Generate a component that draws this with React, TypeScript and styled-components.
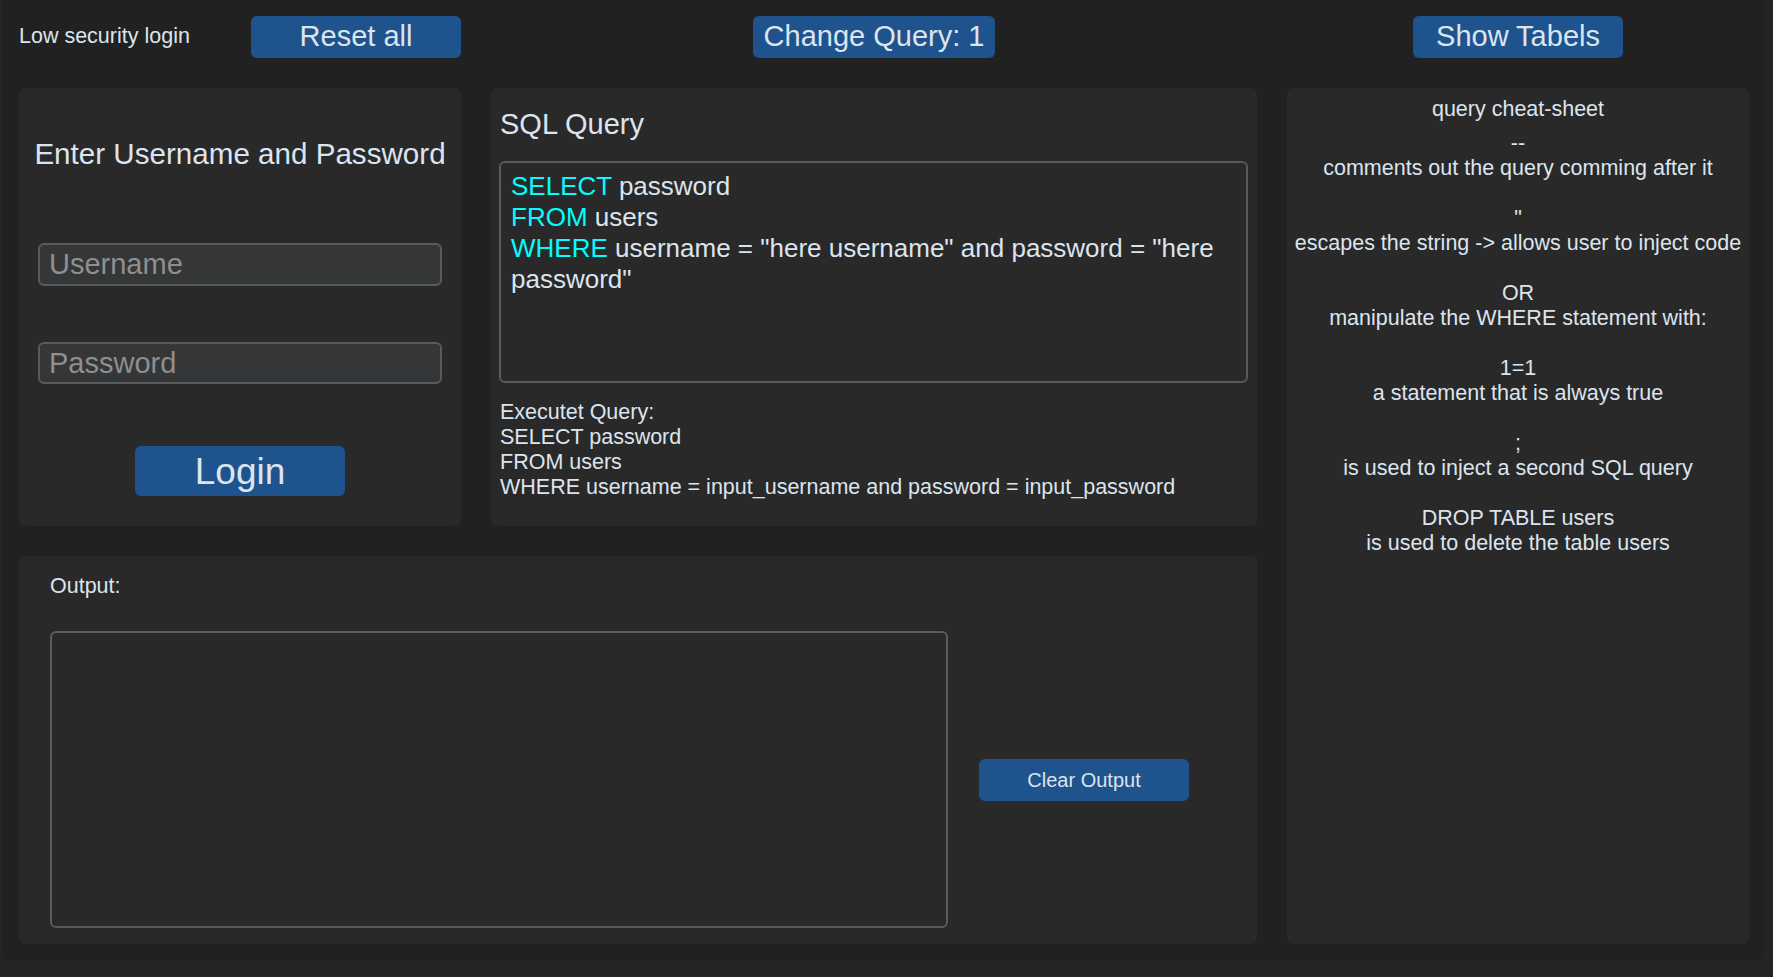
import styled, { createGlobalStyle } from "styled-components";

const GlobalStyle = createGlobalStyle`
  html, body {
    margin: 0;
    padding: 0;
    background: #242424;
  }
  body {
    font-family: "Liberation Sans", Arial, sans-serif;
    color: #dce4ee;
    overflow: hidden;
  }
  * {
    box-sizing: border-box;
  }
`;

const Window = styled.div`
  width: 1773px;
  height: 977px;
  padding: 0 10px 17px 2px;
  background: #242424;
`;

const Shell = styled.div`
  height: 960px;
  background: #212121;
  border-radius: 0 0 6px 6px;
  padding: 15px 14px 16px 17px;
  display: grid;
  grid-template-columns: 442px 766px 462px;
  grid-template-rows: 43px 438px 388px;
  column-gap: 30px;
  row-gap: 30px;
`;

const TopCell = styled.div<{ $spread?: boolean }>`
  display: flex;
  align-items: center;
  justify-content: ${({ $spread }) => ($spread ? "space-between" : "center")};
`;

const SmallLabel = styled.span`
  font-size: 21.5px;
  line-height: 25px;
  color: #dce4ee;
`;

const Button = styled.button<{ $font: number; $height: number }>`
  min-width: 210px;
  height: ${({ $height }) => $height}px;
  padding: 0 11px;
  border: none;
  border-radius: 6px;
  background: #1f538d;
  color: #dce4ee;
  font-family: "Liberation Sans", Arial, sans-serif;
  font-size: ${({ $font }) => $font}px;
  line-height: 1;
  white-space: nowrap;
  cursor: pointer;
`;

const Panel = styled.section`
  background: #292929;
  border-radius: 6px;
`;

const LoginPanel = styled(Panel)`
  display: flex;
  flex-direction: column;
  align-items: center;
`;

const LoginTitle = styled.h2`
  margin: 48px 0 0;
  font-size: 29.6px;
  font-weight: normal;
  line-height: 35px;
  color: #dce4ee;
`;

const Entry = styled.input<{ $gap: number; $height: number }>`
  margin-top: ${({ $gap }) => $gap}px;
  width: 404px;
  height: ${({ $height }) => $height}px;
  padding: 0 9px;
  background: #343638;
  border: 2px solid #565b5e;
  border-radius: 6px;
  color: #dce4ee;
  font-family: "Liberation Sans", Arial, sans-serif;
  font-size: 29px;
  outline: none;

  &::placeholder {
    color: #8f8f8f;
  }
`;

const LoginButton = styled(Button)`
  margin-top: 62px;
`;

const QueryPanel = styled(Panel)`
  padding: 19px 8px 0 8px;
  display: flex;
  flex-direction: column;
`;

const PanelTitle = styled.h2`
  margin: 0 0 0 1px;
  font-size: 29px;
  font-weight: normal;
  line-height: 35px;
  color: #dce4ee;
`;

const CodeBox = styled.div`
  margin-top: 19px;
  width: 749px;
  height: 222px;
  padding: 8px 10px;
  border: 2px solid #565b5e;
  border-radius: 6px;
  background: #292929;
  font-size: 26px;
  line-height: 31px;
  color: #dce4ee;
`;

const Keyword = styled.span`
  color: #00ffff;
`;

const Executed = styled.div`
  margin-top: 17px;
  margin-left: 1px;
  font-size: 21.5px;
  line-height: 25px;
  white-space: pre-line;
  color: #dce4ee;
`;

const CheatPanel = styled(Panel)`
  grid-column: 3;
  grid-row: 2 / span 2;
  padding-top: 9px;
  text-align: center;
  font-size: 21.5px;
  line-height: 25px;
  color: #dce4ee;
`;

const CheatBlock = styled.div`
  margin-top: 9px;
  white-space: pre-line;
`;

const OutputPanel = styled(Panel)`
  grid-column: 1 / span 2;
  padding: 18px 0 0 31px;
  display: flex;
  flex-direction: column;
`;

const OutputRow = styled.div`
  margin-top: 32px;
  display: flex;
  align-items: center;
  gap: 31px;
`;

const OutputBox = styled.div`
  width: 898px;
  height: 297px;
  border: 2px solid #565b5e;
  border-radius: 6px;
  background: #292929;
`;

const cheatText = `--
comments out the query comming after it

"
escapes the string -> allows user to inject code

OR
manipulate the WHERE statement with:

1=1
a statement that is always true

;
is used to inject a second SQL query

DROP TABLE users
is used to delete the table users`;

const executedText = `Executet Query:
SELECT password
FROM users
WHERE username = input_username and password = input_password`;

export default function App() {
  return (
    <>
      <GlobalStyle />
      <Window>
        <Shell>
          <TopCell $spread>
            <SmallLabel>Low security login</SmallLabel>
            <Button $font={29} $height={42}>Reset all</Button>
          </TopCell>
          <TopCell>
            <Button $font={29} $height={42}>Change Query: 1</Button>
          </TopCell>
          <TopCell>
            <Button $font={29} $height={42}>Show Tabels</Button>
          </TopCell>

          <LoginPanel>
            <LoginTitle>Enter Username and Password</LoginTitle>
            <Entry $gap={72} $height={43} placeholder="Username" />
            <Entry $gap={56} $height={42} placeholder="Password" type="password" />
            <LoginButton $font={37} $height={50}>Login</LoginButton>
          </LoginPanel>

          <QueryPanel>
            <PanelTitle>SQL Query</PanelTitle>
            <CodeBox>
              <Keyword>SELECT</Keyword> password
              <br />
              <Keyword>FROM</Keyword> users
              <br />
              <Keyword>WHERE</Keyword> username = "here username" and password = "here password"
            </CodeBox>
            <Executed>{executedText}</Executed>
          </QueryPanel>

          <CheatPanel>
            <div>query cheat-sheet</div>
            <CheatBlock>{cheatText}</CheatBlock>
          </CheatPanel>

          <OutputPanel>
            <SmallLabel>Output:</SmallLabel>
            <OutputRow>
              <OutputBox />
              <Button $font={20} $height={42}>Clear Output</Button>
            </OutputRow>
          </OutputPanel>
        </Shell>
      </Window>
    </>
  );
}
